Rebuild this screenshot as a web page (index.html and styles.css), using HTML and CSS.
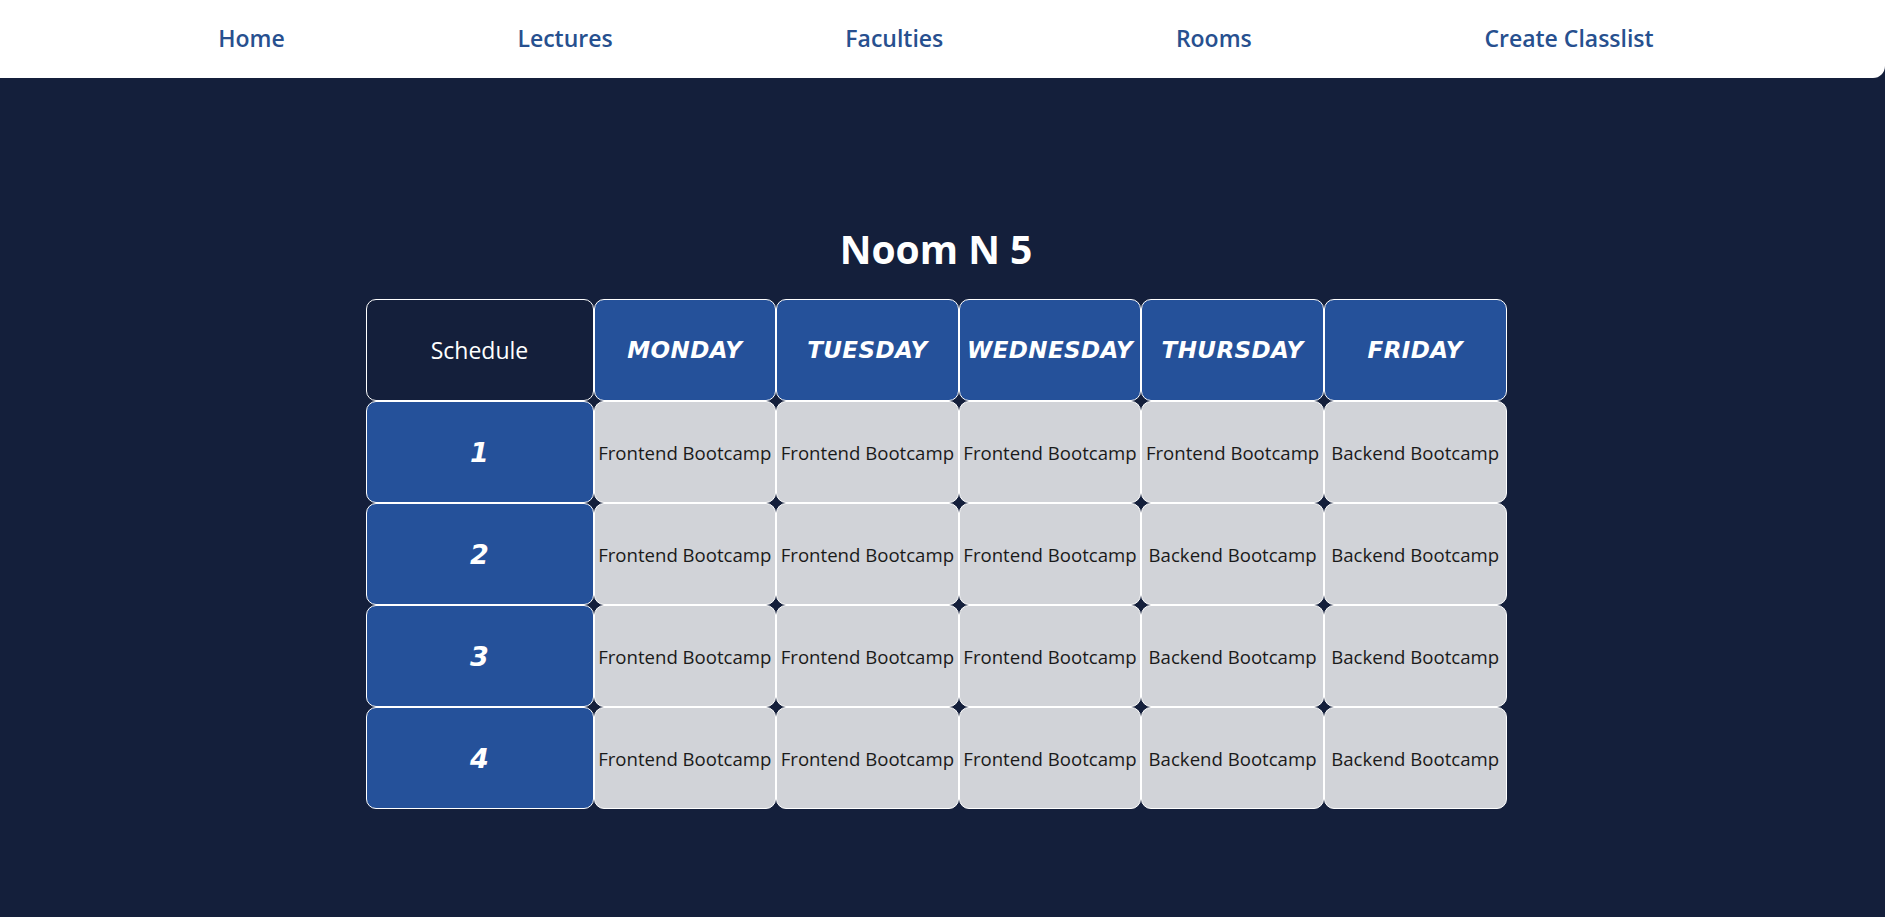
FILE: index.html
```html
<!DOCTYPE html>
<html lang="en">
<head>
<meta charset="utf-8">
<title>Room Schedule</title>
<link rel="stylesheet" href="styles.css">
</head>
<body>
<nav class="topnav">
  <ul class="nav-list">
    <li><a class="nav-link" href="#">Home</a></li>
    <li><a class="nav-link" href="#">Lectures</a></li>
    <li><a class="nav-link" href="#">Faculties</a></li>
    <li><a class="nav-link" href="#">Rooms</a></li>
    <li><a class="nav-link" href="#">Create Classlist</a></li>
  </ul>
</nav>
<main class="content">
  <h1 class="title">Noom N 5</h1>
  <table class="schedule">
    <thead>
      <tr>
        <th class="corner">Schedule</th>
        <th class="day">MONDAY</th>
        <th class="day">TUESDAY</th>
        <th class="day">WEDNESDAY</th>
        <th class="day">THURSDAY</th>
        <th class="day">FRIDAY</th>
      </tr>
    </thead>
    <tbody>
      <tr>
        <th class="slot">1</th>
        <td class="lesson">Frontend Bootcamp</td>
        <td class="lesson">Frontend Bootcamp</td>
        <td class="lesson">Frontend Bootcamp</td>
        <td class="lesson">Frontend Bootcamp</td>
        <td class="lesson">Backend Bootcamp</td>
      </tr>
      <tr>
        <th class="slot">2</th>
        <td class="lesson">Frontend Bootcamp</td>
        <td class="lesson">Frontend Bootcamp</td>
        <td class="lesson">Frontend Bootcamp</td>
        <td class="lesson">Backend Bootcamp</td>
        <td class="lesson">Backend Bootcamp</td>
      </tr>
      <tr>
        <th class="slot">3</th>
        <td class="lesson">Frontend Bootcamp</td>
        <td class="lesson">Frontend Bootcamp</td>
        <td class="lesson">Frontend Bootcamp</td>
        <td class="lesson">Backend Bootcamp</td>
        <td class="lesson">Backend Bootcamp</td>
      </tr>
      <tr>
        <th class="slot">4</th>
        <td class="lesson">Frontend Bootcamp</td>
        <td class="lesson">Frontend Bootcamp</td>
        <td class="lesson">Frontend Bootcamp</td>
        <td class="lesson">Backend Bootcamp</td>
        <td class="lesson">Backend Bootcamp</td>
      </tr>
    </tbody>
  </table>
</main>
</body>
</html>
```

FILE: styles.css
```css
* {
  box-sizing: border-box;
}

html, body {
  margin: 0;
  padding: 0;
}

body {
  background: #141f3b;
  min-height: 100vh;
  font-family: "Open Sans", "Noto Sans", sans-serif;
}

.topnav {
  background: #ffffff;
  height: 78px;
  border-bottom-right-radius: 12px;
}

.nav-list {
  list-style: none;
  margin: 0;
  padding: 0 115px 0 102px;
  height: 100%;
  display: flex;
  justify-content: space-around;
  align-items: center;
}

.nav-link {
  color: #27508f;
  text-decoration: none;
  font-size: 23px;
  font-weight: 600;
  display: block;
  padding-bottom: 3px;
}

.content {
  padding: 145px 13px 0 0;
  display: flex;
  flex-direction: column;
  align-items: center;
}

.title {
  color: #ffffff;
  font-size: 39px;
  font-weight: 700;
  margin: 0 0 24px;
  line-height: 52px;
}

.schedule {
  border-collapse: separate;
  border-spacing: 0;
  table-layout: fixed;
  width: 1141px;
}

.schedule th,
.schedule td {
  border: 1px solid #ffffff;
  border-radius: 10px;
  height: 102px;
  padding: 0;
  text-align: center;
  vertical-align: middle;
}

.corner {
  width: 228px;
  background: #141f3b;
  color: #ffffff;
  font-weight: 400;
  font-size: 23px;
}

.day {
  width: 182.6px;
  background: #25519a;
  color: #ffffff;
  font-family: "DejaVu Sans", sans-serif;
  font-weight: 700;
  font-style: italic;
  font-size: 23px;
  letter-spacing: 0.4px;
  white-space: nowrap;
}

.slot {
  background: #25519a;
  color: #ffffff;
  font-family: "DejaVu Sans", sans-serif;
  font-weight: 700;
  font-style: italic;
  font-size: 27px;
}

.lesson {
  background: #d1d3d8;
  color: #1a1a1a;
  font-size: 18.6px;
  white-space: nowrap;
}
```
